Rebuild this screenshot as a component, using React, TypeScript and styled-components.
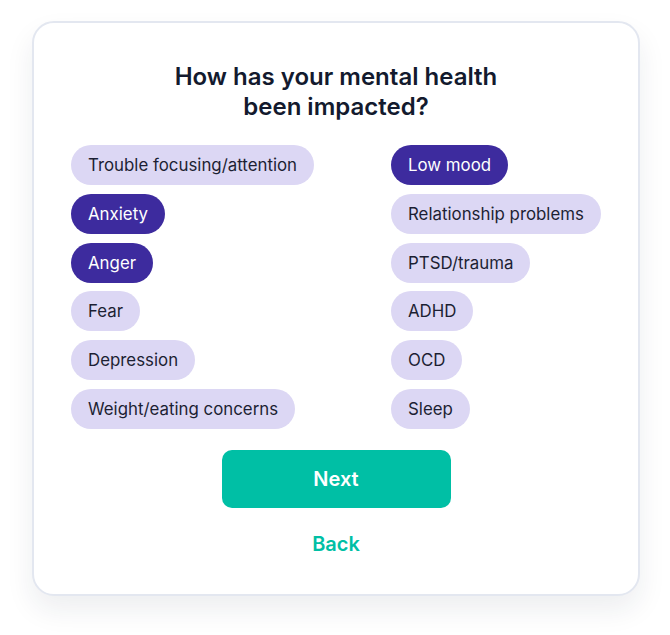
import styled, { createGlobalStyle } from "styled-components";
import { useState } from "react";

const GlobalStyle = createGlobalStyle`
  body {
    margin: 0;
    background: #ffffff;
    font-family: Inter, "Liberation Sans", sans-serif;
  }
`;

const Page = styled.div`
  padding: 21px 30px 40px 32px;
`;

const Card = styled.div`
  width: 608px;
  box-sizing: border-box;
  background: #ffffff;
  border: 2px solid #e3e7f0;
  border-radius: 22px;
  box-shadow: 0 14px 28px rgba(30, 41, 59, 0.08);
  padding: 39px 37px 37px 37px;
  display: flex;
  flex-direction: column;
  align-items: center;
`;

const Title = styled.h1`
  margin: 0 0 24px;
  font-size: 24px;
  line-height: 29.5px;
  font-weight: 600;
  color: #131a2e;
  text-align: center;
`;

const Options = styled.div`
  align-self: stretch;
  display: grid;
  grid-template-columns: 320px 1fr;
`;

const Column = styled.div`
  display: flex;
  flex-direction: column;
  align-items: flex-start;
  gap: 8.8px;
`;

const Chip = styled.button<{ $selected: boolean }>`
  height: 40px;
  padding: 0 17px;
  border: none;
  border-radius: 20px;
  font-family: Inter, "Liberation Sans", sans-serif;
  font-size: 16.85px;
  font-weight: 400;
  cursor: pointer;
  background: ${({ $selected }) => ($selected ? "#3d2b9e" : "#dcd7f4")};
  color: ${({ $selected }) => ($selected ? "#ffffff" : "#1c1f33")};
`;

const NextButton = styled.button`
  margin-top: 21px;
  width: 229px;
  height: 58px;
  border: none;
  border-radius: 10px;
  background: #00bfa5;
  color: #ffffff;
  font-family: Inter, "Liberation Sans", sans-serif;
  font-size: 20px;
  font-weight: 600;
  cursor: pointer;
`;

const BackButton = styled.button`
  margin-top: 23px;
  border: none;
  background: none;
  padding: 0;
  color: #00bfa5;
  font-family: Inter, "Liberation Sans", sans-serif;
  font-size: 20px;
  font-weight: 600;
  line-height: 26px;
  cursor: pointer;
`;

const leftOptions = [
  "Trouble focusing/attention",
  "Anxiety",
  "Anger",
  "Fear",
  "Depression",
  "Weight/eating concerns",
];

const rightOptions = [
  "Low mood",
  "Relationship problems",
  "PTSD/trauma",
  "ADHD",
  "OCD",
  "Sleep",
];

export default function App() {
  const [selected, setSelected] = useState<string[]>(["Anxiety", "Anger", "Low mood"]);

  const toggle = (item: string) => {
    setSelected((prev) =>
      prev.includes(item) ? prev.filter((i) => i !== item) : [...prev, item]
    );
  };

  const renderColumn = (items: string[]) => (
    <Column>
      {items.map((item) => (
        <Chip key={item} $selected={selected.includes(item)} onClick={() => toggle(item)}>
          {item}
        </Chip>
      ))}
    </Column>
  );

  return (
    <>
      <GlobalStyle />
      <Page>
        <Card>
          <Title>
            How has your mental health
            <br />
            been impacted?
          </Title>
          <Options>
            {renderColumn(leftOptions)}
            {renderColumn(rightOptions)}
          </Options>
          <NextButton>Next</NextButton>
          <BackButton>Back</BackButton>
        </Card>
      </Page>
    </>
  );
}
